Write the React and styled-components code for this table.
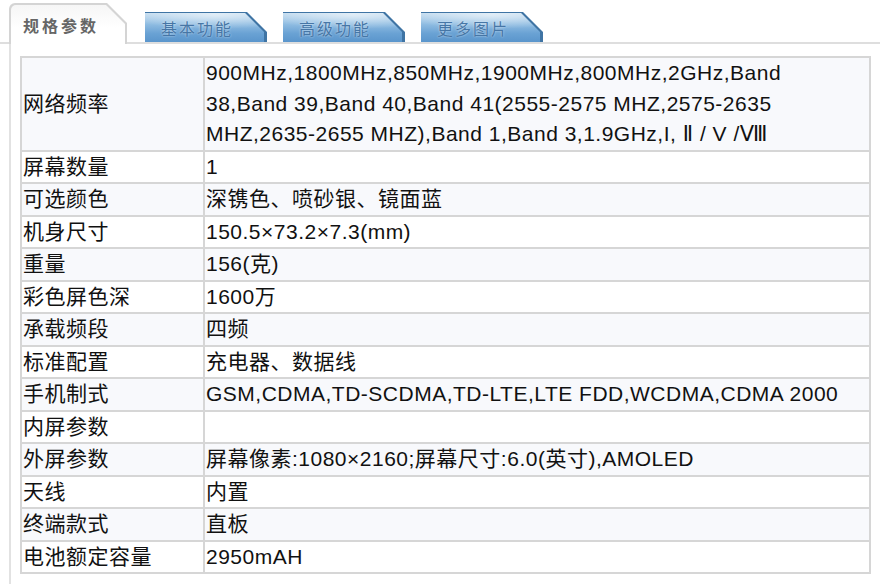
import React from 'react';
import styled, {createGlobalStyle} from 'styled-components';

const GlobalStyle = createGlobalStyle`
  body {
    margin: 0;
    background: #fff;
    font-family: "Liberation Sans", "Noto Sans CJK SC", sans-serif;
  }
`;

const specs = [
    {
        label: '网络频率',
        lines: [
            '900MHz,1800MHz,850MHz,1900MHz,800MHz,2GHz,Band',
            '38,Band 39,Band 40,Band 41(2555-2575 MHZ,2575-2635',
            'MHZ,2635-2655 MHZ),Band 1,Band 3,1.9GHz,I, Ⅱ / V /Ⅷ',
        ],
    },
    {label: '屏幕数量', lines: ['1']},
    {label: '可选颜色', lines: ['深镌色、喷砂银、镜面蓝']},
    {label: '机身尺寸', lines: ['150.5×73.2×7.3(mm)']},
    {label: '重量', lines: ['156(克)']},
    {label: '彩色屏色深', lines: ['1600万']},
    {label: '承载频段', lines: ['四频']},
    {label: '标准配置', lines: ['充电器、数据线']},
    {label: '手机制式', lines: ['GSM,CDMA,TD-SCDMA,TD-LTE,LTE FDD,WCDMA,CDMA 2000']},
    {label: '内屏参数', lines: ['']},
    {label: '外屏参数', lines: ['屏幕像素:1080×2160;屏幕尺寸:6.0(英寸),AMOLED']},
    {label: '天线', lines: ['内置']},
    {label: '终端款式', lines: ['直板']},
    {label: '电池额定容量', lines: ['2950mAH']},
];

const tabs = ['规格参数', '基本功能', '高级功能', '更多图片'];

class App extends React.Component {
    render() {
        return (
            <Page>
                <GlobalStyle/>
                <TabBar>
                    {tabs.map((t, i) => i === 0
                        ? <ActiveTab key={t}><span>{t}</span></ActiveTab>
                        : <BlueTab key={t}><span>{t}</span></BlueTab>
                    )}
                </TabBar>
                <Panel>
                    <SpecTable>
                        <tbody>
                        {specs.map((row, i) => (
                            <Row key={row.label} $shaded={i % 2 === 0}>
                                <Label>{row.label}</Label>
                                <Value>
                                    {row.lines.map((l, j) => (
                                        <React.Fragment key={j}>
                                            {j > 0 && <br/>}
                                            {l}
                                        </React.Fragment>
                                    ))}
                                </Value>
                            </Row>
                        ))}
                        </tbody>
                    </SpecTable>
                </Panel>
            </Page>
        );
    }
}

const Page = styled.div`
  width: 880px;
  height: 584px;
  overflow: hidden;
`;

const TabBar = styled.div`
  display: flex;
  align-items: flex-end;
  gap: 16px;
  height: 42px;
  padding-left: 9px;
  border-bottom: 2px solid #dedede;
`;

const ActiveTab = styled.div`
  position: relative;
  width: 118px;
  height: 41px;
  margin-bottom: -2px;
  margin-right: 2px;
  background: #d4d4d4;
  border-top-left-radius: 6px;
  clip-path: polygon(0 0, 98px 0, 118px 20px, 118px 100%, 0 100%);

  &::before {
    content: '';
    position: absolute;
    left: 2px;
    top: 2px;
    right: 2px;
    bottom: 0;
    background: linear-gradient(#f6f6f6, #fff 60%);
    border-top-left-radius: 5px;
    clip-path: polygon(0 0, 95px 0, 114px 19px, 114px 100%, 0 100%);
  }

  span {
    position: relative;
    display: block;
    padding: 12px 0 0 14px;
    font-family: "Noto Sans CJK SC", sans-serif;
    font-size: 16px;
    font-weight: 700;
    letter-spacing: 3px;
    color: #666;
    line-height: 20px;
  }
`;

const BlueTab = styled.div`
  position: relative;
  width: 122px;
  height: 30px;
  background: #3f74a4;
  clip-path: polygon(0 0, 102px 0, 122px 20px, 122px 100%, 0 100%);

  &::before {
    content: '';
    position: absolute;
    left: 0;
    top: 1px;
    right: 3px;
    bottom: 0;
    background:
      radial-gradient(ellipse 90px 14px at 70px 2px, rgba(255,255,255,0.55), rgba(255,255,255,0) 100%),
      linear-gradient(180deg, #c4dcef 0%, #93bfe3 35%, #6aa2d4 70%, #5a95cc 100%);
    clip-path: polygon(0 0, 100px 0, 119px 19px, 119px 100%, 0 100%);
  }

  span {
    position: relative;
    display: block;
    padding: 7px 0 0 16px;
    font-family: "Noto Sans CJK SC", sans-serif;
    font-size: 16px;
    letter-spacing: 2px;
    color: #4676a6;
    line-height: 18px;
    text-shadow: 0 0 2px rgba(255,255,255,0.7);
  }
`;

const Panel = styled.div`
  margin-left: 9px;
  border-left: 2px solid #e2e2e2;
  padding: 12px 0 0 9px;
  height: 540px;
`;

const SpecTable = styled.table`
  width: 851px;
  border-collapse: separate;
  border-spacing: 0;
  border: 1px solid #d6d6d6;
  font-family: "Liberation Sans", "DejaVu Sans", "Noto Sans CJK SC", sans-serif;
  font-size: 21px;
  letter-spacing: 0.5px;
  color: #111;
`;

const Row = styled.tr`
  background: ${p => p.$shaded ? '#f8f9fc' : '#fff'};
`;

const Label = styled.td`
  width: 179px;
  padding: 0 1px;
  border: 1px solid #d6d6d6;
  line-height: 30.5px;
  vertical-align: middle;
  white-space: nowrap;
`;

const Value = styled.td`
  padding: 0 1px;
  border: 1px solid #d6d6d6;
  line-height: 30.5px;
  white-space: nowrap;
`;

export default App;
